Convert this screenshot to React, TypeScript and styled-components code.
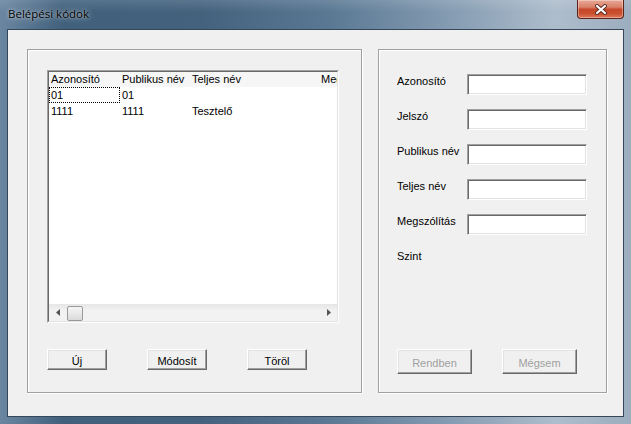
import * as React from 'react';
import styled, { createGlobalStyle } from 'styled-components';

const GlobalStyle = createGlobalStyle`
  html, body {
    margin: 0;
    padding: 0;
    background: #5d7893;
  }
  body {
    font-family: "Liberation Sans", Arial, sans-serif;
    font-size: 11px;
    color: #000;
  }
`;

const Window = styled.div`
  width: 631px;
  height: 424px;
  display: flex;
  flex-direction: column;
  background:
    linear-gradient(180deg, rgba(255, 255, 255, 0.12) 0px, rgba(255, 255, 255, 0) 12px),
    linear-gradient(90deg, #6a86a1 0%, #41607c 10%, #44627e 32%, #5a7893 52%, #869db3 72%, #aebdcc 88%, #9cadbf 100%);
`;

const TitleBar = styled.div`
  height: 29px;
  display: flex;
  align-items: flex-start;
  padding-left: 8px;
`;

const Title = styled.span`
  font-family: "Open Sans", "Noto Sans", sans-serif;
  font-size: 11.5px;
  line-height: 28px;
  color: #000;
  text-shadow: 0 0 6px rgba(255, 255, 255, 0.7), 0 0 2px rgba(255, 255, 255, 0.5);
`;

const CloseButton = styled.div`
  margin-left: auto;
  margin-right: 7px;
  width: 45px;
  height: 18px;
  display: flex;
  align-items: center;
  justify-content: center;
  border: 1px solid #5a2418;
  border-top: none;
  border-radius: 0 0 4px 4px;
  background: linear-gradient(180deg, #e9a997 0%, #d98068 40%, #c7472b 52%, #c9502f 75%, #e0785a 100%);
  box-shadow: inset 0 0 0 1px rgba(255, 255, 255, 0.35);
`;

const Client = styled.div`
  flex: 1;
  margin: 0 7px 7px;
  border: 1px solid #37475a;
  background: #f0f0f0;
  display: flex;
  align-items: flex-start;
  gap: 16px;
  padding: 19px 0 0 19px;
`;

const GroupBox = styled.div<{ $width: number }>`
  box-sizing: border-box;
  width: ${p => p.$width}px;
  height: 344px;
  border: 1px solid #a0a0a0;
  box-shadow: 1px 1px 0 #fff, inset 1px 1px 0 #fff;
  display: flex;
  flex-direction: column;
`;

const ListPanel = styled(GroupBox)`
  padding: 20px 0 22px 19px;
`;

const FormPanel = styled(GroupBox)`
  padding: 24px 0 18px 18px;
`;

const ListView = styled.div`
  box-sizing: border-box;
  width: 292px;
  height: 253px;
  border: 1px solid;
  border-color: #a0a0a0 #fff #fff #a0a0a0;
`;

const ListInner = styled.div`
  box-sizing: border-box;
  height: 100%;
  border: 1px solid;
  border-color: #696969 #e3e3e3 #e3e3e3 #696969;
  background: #fff;
  display: flex;
  flex-direction: column;
  overflow: hidden;
`;

const HeaderRow = styled.div`
  display: flex;
  height: 15px;
  line-height: 15px;
  background: #f6f6f6;
  white-space: nowrap;
  overflow: hidden;
`;

const Row = styled.div`
  display: flex;
  height: 16px;
  line-height: 16px;
  white-space: nowrap;
`;

const Cell = styled.div<{ $width?: number; $focused?: boolean }>`
  box-sizing: border-box;
  flex: ${p => (p.$width ? `0 0 ${p.$width}px` : '1 0 auto')};
  padding-left: ${p => (p.$focused ? 1 : 2)}px;
  border: ${p => (p.$focused ? '1px dotted #000' : 'none')};
  line-height: ${p => (p.$focused ? 14 : 'inherit')}px;
`;

const ScrollBar = styled.div`
  margin-top: auto;
  height: 17px;
  display: flex;
  background: linear-gradient(180deg, #e6e6e6 0%, #f2f2f2 40%, #f2f2f2 100%);
`;

const ScrollArrow = styled.div`
  width: 17px;
  height: 17px;
  display: flex;
  align-items: center;
  justify-content: center;
`;

const ScrollThumb = styled.div`
  box-sizing: border-box;
  width: 16px;
  height: 15px;
  margin: 2px 0 0 1px;
  border: 1px solid #999;
  border-radius: 2px;
  background: linear-gradient(180deg, #f5f5f5 0%, #e8e8e8 50%, #dadada 100%);
`;

const ScrollTrack = styled.div`
  flex: 1;
`;

const ButtonRow = styled.div<{ $gap: number }>`
  margin-top: auto;
  display: flex;
  gap: ${p => p.$gap}px;
`;

const Button = styled.button<{ $width: number; $height: number }>`
  box-sizing: border-box;
  width: ${p => p.$width}px;
  height: ${p => p.$height}px;
  padding: 2px 0 0;
  border: 1px solid;
  border-color: #fff #696969 #696969 #fff;
  box-shadow: inset -1px -1px 0 #a0a0a0, inset 1px 1px 0 #e3e3e3;
  background: #f0f0f0;
  font-family: "Liberation Sans", Arial, sans-serif;
  font-size: 11px;
  color: #000;

  &:disabled {
    color: #a0a0a0;
  }
`;

const Form = styled.div`
  display: grid;
  grid-template-columns: 70px 120px;
  grid-auto-rows: 21px;
  row-gap: 14px;
`;

const Label = styled.div`
  line-height: 15px;
  white-space: nowrap;
`;

const TextInput = styled.input`
  box-sizing: border-box;
  width: 120px;
  height: 21px;
  margin: 0;
  border: 1px solid;
  border-color: #a0a0a0 #fff #fff #a0a0a0;
  box-shadow: inset 1px 1px 0 #696969, inset -1px -1px 0 #e3e3e3;
  background: #fff;
  outline: none;
`;

const CloseIcon = () => (
  <svg width="14" height="11" viewBox="0 0 14 11">
    <path d="M3 2 L11 9 M11 2 L3 9" stroke="#5a2a20" strokeWidth="4" strokeLinecap="round" />
    <path d="M3 2 L11 9 M11 2 L3 9" stroke="#fff" strokeWidth="2.2" strokeLinecap="round" />
  </svg>
);

const Arrow = ({ dir }: { dir: 'left' | 'right' }) => (
  <svg width="4" height="7" viewBox="0 0 4 7">
    {dir === 'left'
      ? <path d="M4 0 L0 3.5 L4 7 Z" fill="#555" />
      : <path d="M0 0 L4 3.5 L0 7 Z" fill="#555" />}
  </svg>
);

const columns = [
  { title: 'Azonosító', width: 71 },
  { title: 'Publikus név', width: 70 },
  { title: 'Teljes név', width: 129 },
  { title: 'Megszólítás', width: 0 },
];

const rows = [
  ['01', '01', '', ''],
  ['1111', '1111', 'Tesztelő', ''],
];

const fields = ['Azonosító', 'Jelszó', 'Publikus név', 'Teljes név', 'Megszólítás'];

export default function App() {
  return (
    <>
      <GlobalStyle />
      <Window>
        <TitleBar>
          <Title>Belépési kódok</Title>
          <CloseButton>
            <CloseIcon />
          </CloseButton>
        </TitleBar>
        <Client>
          <ListPanel $width={335}>
            <ListView>
              <ListInner>
                <HeaderRow>
                  {columns.map(c => (
                    <Cell key={c.title} $width={c.width || undefined}>{c.title}</Cell>
                  ))}
                </HeaderRow>
                {rows.map((r, i) => (
                  <Row key={i}>
                    {r.map((v, j) => (
                      <Cell key={j} $width={columns[j].width || undefined} $focused={i === 0 && j === 0}>
                        {v}
                      </Cell>
                    ))}
                  </Row>
                ))}
                <ScrollBar>
                  <ScrollArrow><Arrow dir="left" /></ScrollArrow>
                  <ScrollThumb />
                  <ScrollTrack />
                  <ScrollArrow><Arrow dir="right" /></ScrollArrow>
                </ScrollBar>
              </ListInner>
            </ListView>
            <ButtonRow $gap={40}>
              <Button $width={60} $height={21}>Új</Button>
              <Button $width={60} $height={21}>Módosít</Button>
              <Button $width={60} $height={21}>Töröl</Button>
            </ButtonRow>
          </ListPanel>
          <FormPanel $width={229}>
            <Form>
              {fields.map(f => (
                <React.Fragment key={f}>
                  <Label>{f}</Label>
                  <TextInput />
                </React.Fragment>
              ))}
              <Label>Szint</Label>
            </Form>
            <ButtonRow $gap={30}>
              <Button $width={75} $height={25} disabled>Rendben</Button>
              <Button $width={75} $height={25} disabled>Mégsem</Button>
            </ButtonRow>
          </FormPanel>
        </Client>
      </Window>
    </>
  );
}
